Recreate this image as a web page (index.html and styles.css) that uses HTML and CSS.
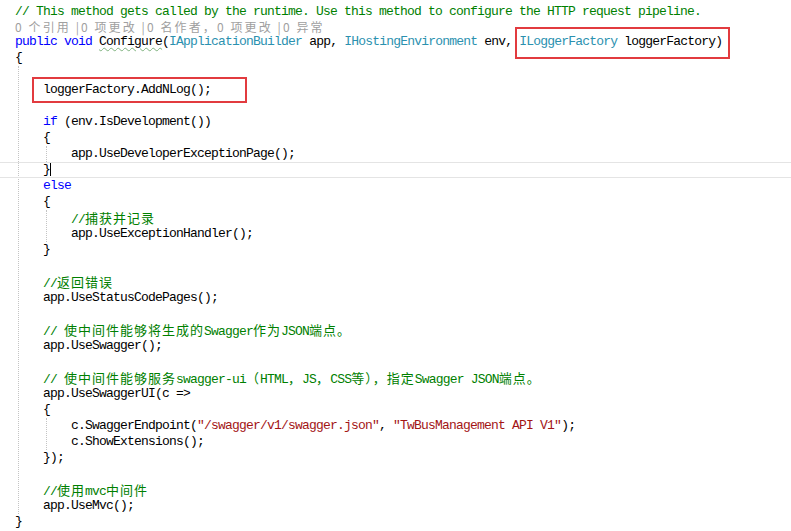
FILE: index.html
```html
<!DOCTYPE html>
<html lang="zh-CN">
<head>
<meta charset="utf-8">
<title>Startup.cs</title>
<link rel="stylesheet" href="styles.css">
</head>
<body>
<div class="editor">
  <div class="ln"><span class="c">// This method gets called by the runtime. Use this method to configure the HTTP request pipeline.</span></div>
  <div class="ln lens">0 个引用 |0 项更改 |0 名作者，0 项更改 |0 异常</div>
  <div class="ln"><span class="k">public</span> <span class="k">void</span> <span class="sq">Configure</span>(<span class="t">IApplicationBuilder</span> app, <span class="t">IHostingEnvironment</span> env, <span class="mark mark1"><span class="t">ILoggerFactory</span> loggerFactory)</span></div>
  <div class="ln">{</div>
  <div class="block">
    <div class="ln"></div>
    <div class="ln"><span class="mark mark2">loggerFactory.AddNLog();</span></div>
    <div class="ln"></div>
    <div class="ln"><span class="k">if</span> (env.IsDevelopment())</div>
    <div class="ln">{</div>
    <div class="block">
      <div class="ln">app.UseDeveloperExceptionPage();</div>
    </div>
    <div class="ln cur">}<span class="caret"></span></div>
    <div class="ln"><span class="k">else</span></div>
    <div class="ln">{</div>
    <div class="block">
      <div class="ln"><span class="c">//<span class="cn">捕获并记录</span></span></div>
      <div class="ln">app.UseExceptionHandler();</div>
    </div>
    <div class="ln">}</div>
    <div class="ln"></div>
    <div class="ln"><span class="c">//<span class="cn">返回错误</span></span></div>
    <div class="ln">app.UseStatusCodePages();</div>
    <div class="ln"></div>
    <div class="ln"><span class="c">// <span class="cn">使中间件能够将生成的</span>Swagger<span class="cn">作为</span>JSON<span class="cn">端点。</span></span></div>
    <div class="ln">app.UseSwagger();</div>
    <div class="ln"></div>
    <div class="ln"><span class="c">// <span class="cn">使中间件能够服务</span>swagger-ui<span class="cn">（</span>HTML<span class="cn">，</span>JS<span class="cn">，</span>CSS<span class="cn">等），指定</span>Swagger JSON<span class="cn">端点。</span></span></div>
    <div class="ln">app.UseSwaggerUI(c =&gt;</div>
    <div class="ln">{</div>
    <div class="block">
      <div class="ln">c.SwaggerEndpoint(<span class="s">"/swagger/v1/swagger.json"</span>, <span class="s">"TwBusManagement API V1"</span>);</div>
      <div class="ln">c.ShowExtensions();</div>
    </div>
    <div class="ln">});</div>
    <div class="ln"></div>
    <div class="ln"><span class="c">//<span class="cn">使用</span>mvc<span class="cn">中间件</span></span></div>
    <div class="ln">app.UseMvc();</div>
  </div>
  <div class="ln">}</div>
</div>
</body>
</html>
```

FILE: styles.css
```css
html, body {
  margin: 0;
  padding: 0;
  background: #ffffff;
}

.editor {
  padding: 4px 0 0 15px;
  font-family: "Liberation Mono", monospace;
  font-size: 13px;
  letter-spacing: -0.8px;
  color: #000000;
  overflow: hidden;
  height: 527px;
}

.ln {
  height: 16px;
  line-height: 16px;
  white-space: pre;
}

.lens {
  height: 14px;
  line-height: 14px;
  font-family: "Noto Sans CJK SC", sans-serif;
  font-size: 12px;
  letter-spacing: 2.1px;
  color: #a0a0a0;
}

.block {
  margin-left: 3px;
  border-left: 1px dotted #c4c4c4;
  padding-left: 24px;
}

.c { color: #008000; }
.k { color: #0000ff; }
.t { color: #2b91af; }
.s { color: #a31515; }

.cn {
  font-family: "Noto Sans CJK SC", sans-serif;
  font-size: 13px;
  letter-spacing: 1px;
}

.sq {
  text-decoration: underline wavy #7fb27f;
  text-decoration-thickness: 1px;
  text-underline-offset: 2px;
}

.cur {
  margin-left: -43px;
  padding-left: 43px;
  box-sizing: border-box;
  border-top: 1px solid #e4e4e4;
  border-bottom: 1px solid #e4e4e4;
  line-height: 14px;
}

.caret {
  display: inline-block;
  width: 0;
  height: 13px;
  border-left: 1px solid #000000;
  vertical-align: top;
}

.mark {
  position: relative;
  display: inline-block;
  height: 16px;
  vertical-align: top;
}

.mark::after {
  content: "";
  position: absolute;
  border: 2px solid #e23b3f;
}

.mark1::after {
  left: -4px;
  right: -8px;
  top: -7px;
  bottom: -9px;
}

.mark2::after {
  left: -11px;
  right: -36px;
  top: -5px;
  bottom: -5px;
}
```
